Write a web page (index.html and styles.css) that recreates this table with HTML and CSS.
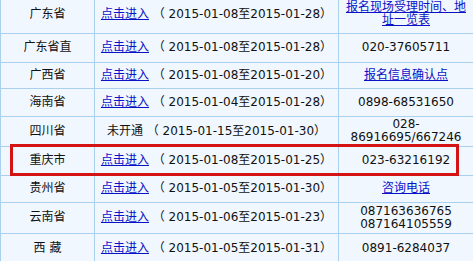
FILE: index.html
```html
<!DOCTYPE html>
<html>
<head>
<meta charset="utf-8">
<link rel="stylesheet" href="styles.css">
</head>
<body>
<div class="wrap">
<table class="grid">
<colgroup><col class="c1"><col class="c2"><col class="c3"></colgroup>
<tr class="h37 first"><td>广东省</td><td><a href="#">点击进入</a> （ 2015-01-08至2015-01-28）</td><td><a href="#">报名现场受理时间、地址一览表</a></td></tr>
<tr class="h29"><td>广东省直</td><td><a href="#">点击进入</a> （ 2015-01-08至2015-01-28）</td><td>020-37605711</td></tr>
<tr class="h26"><td>广西省</td><td><a href="#">点击进入</a> （ 2015-01-08至2015-01-20）</td><td><a href="#">报名信息确认点</a></td></tr>
<tr class="h28"><td>海南省</td><td><a href="#">点击进入</a> （ 2015-01-04至2015-01-28）</td><td>0898-68531650</td></tr>
<tr class="h30"><td>四川省</td><td>未开通 （ 2015-01-15至2015-01-30）</td><td>028-<br>86916695/667246</td></tr>
<tr class="h29"><td>重庆市</td><td><a href="#">点击进入</a> （ 2015-01-08至2015-01-25）</td><td>023-63216192</td></tr>
<tr class="h27"><td>贵州省</td><td><a href="#">点击进入</a> （ 2015-01-05至2015-01-30）</td><td><a href="#">咨询电话</a></td></tr>
<tr class="h31"><td>云南省</td><td><a href="#">点击进入</a> （ 2015-01-06至2015-01-23）</td><td>087163636765<br>087164105559</td></tr>
<tr class="h30"><td>西&nbsp;藏</td><td><a href="#">点击进入</a> （ 2015-01-05至2015-01-31）</td><td>0891-6284037</td></tr>
</table>
<div class="mark"></div>
</div>
</body>
</html>
```
FILE: styles.css
```css
html, body {
  margin: 0;
  padding: 0;
  background: #ffffff;
}
.wrap {
  position: relative;
  width: 473px;
  height: 261px;
  overflow: hidden;
}
.grid {
  border-collapse: collapse;
  table-layout: fixed;
  width: 473px;
  margin-top: -4px;
  font-family: "DejaVu Sans", "Noto Sans CJK SC", sans-serif;
  font-size: 12px;
  line-height: 13px;
  color: #111;
  background: #f0f7fe;
}
.c1 { width: 94px; }
.c2 { width: 244px; }
.c3 { width: 135px; }
.grid td {
  border: 1px solid #a9d0ee;
  text-align: center;
  vertical-align: middle;
  padding: 0 2px;
  white-space: nowrap;
}
.grid td:last-child {
  white-space: normal;
  padding: 0 4px;
}
.grid tr.first td { border-top: none; }
.grid a {
  color: #0a12c8;
  text-decoration: underline;
}
.h37 { height: 37px; }
.h31 { height: 31px; }
.h30 { height: 30px; }
.h29 { height: 29px; }
.h28 { height: 28px; }
.h27 { height: 27px; }
.h26 { height: 26px; }
.mark {
  position: absolute;
  left: 10px;
  top: 144px;
  width: 443px;
  height: 26px;
  border: 3px solid #d41414;
}
```
